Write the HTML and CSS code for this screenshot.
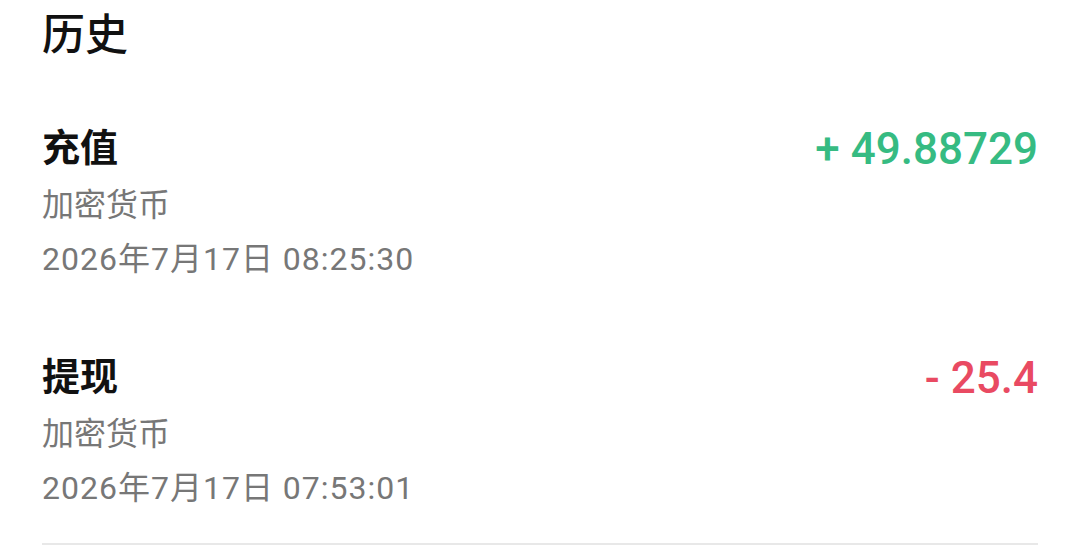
FILE: index.html
```html
<!DOCTYPE html>
<html lang="zh-CN">
<head>
<meta charset="utf-8">
<link rel="stylesheet" href="styles.css">
</head>
<body>
<div class="page">
  <h1 class="title">历史</h1>
  <div class="list">
    <div class="item">
      <div class="info">
        <div class="name">充值</div>
        <div class="sub">加密货币</div>
        <div class="date">2026年7月17日 08:25:30</div>
      </div>
      <div class="amount plus">+ 49.88729</div>
    </div>
    <div class="item last">
      <div class="info">
        <div class="name">提现</div>
        <div class="sub">加密货币</div>
        <div class="date">2026年7月17日 07:53:01</div>
      </div>
      <div class="amount minus">- 25.4</div>
    </div>
  </div>
</div>
</body>
</html>
```
FILE: styles.css
```css
html, body {
  margin: 0;
  padding: 0;
  background: #ffffff;
}
body {
  font-family: "Noto Sans CJK SC", "Noto Sans", sans-serif;
  color: #111;
}
.page {
  padding: 0 42px;
}
.title {
  margin: 0;
  font-size: 43px;
  font-weight: 500;
  line-height: 62px;
}
.list {
  margin-top: 57px;
}
.item {
  display: flex;
  justify-content: space-between;
  align-items: flex-start;
  padding-bottom: 69px;
}
.item.last {
  border-bottom: 2px solid #e8e8e8;
  padding-bottom: 35px;
}
.name {
  font-size: 38px;
  font-weight: 700;
  line-height: 52px;
}
.sub {
  font-size: 32px;
  color: #777;
  line-height: 40px;
  margin-top: 11px;
}
.date {
  font-size: 32px;
  color: #777;
  line-height: 40px;
  margin-top: 17px;
  letter-spacing: 1px;
  font-family: "Roboto", "Noto Sans CJK SC", sans-serif;
}
.amount {
  font-family: "Roboto", sans-serif;
  font-size: 44px;
  font-weight: 500;
  line-height: 52px;
  margin-top: 4px;
}
.plus { color: #36bb82; }
.minus { color: #e94a62; }
```
